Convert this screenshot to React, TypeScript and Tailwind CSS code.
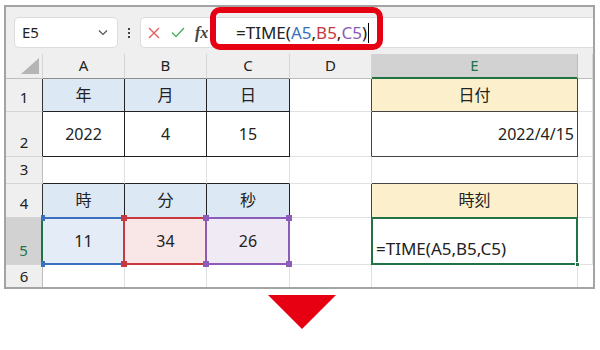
import React from "react";

const FONT = { fontFamily: '"Noto Sans", "Noto Sans CJK JP", sans-serif' };

function Corner({ color, pos }: { color: string; pos: string }) {
  return <span className={`absolute h-[6px] ${color} ${pos}`} />;
}

export default function App() {
  const colHead = "flex items-center justify-center bg-[#efefef] border-r border-b border-r-[#d4d4d4] text-[15px] text-[#222]";
  const rowHead = "flex items-end justify-center pb-[4px] leading-[20px] bg-[#efefef] border-b border-r border-b-[#d4d4d4] text-[15px] text-[#222]";
  const cell = "flex items-center justify-center border-r border-b text-[16px] text-[#222]";
  const plain = `${cell} bg-white border-[#e1e1e1]`;
  const blue = "bg-[#dde8f5]";
  const yellow = "bg-[#fcf0cc]";

  return (
    <div className="relative w-[600px] h-[350px] bg-white overflow-hidden" style={FONT}>
      <div className="ml-[4px] mt-[5px] w-[591px] h-[284px] border-2 border-[#a3a3a3] bg-[#efefef] flex flex-col">
        {/* toolbar */}
        <div className="h-[50px] flex items-start pt-[10px] pl-[8px]">
          <div className="w-[104px] h-[31px] bg-white rounded-[5px] border border-[#dcdcdc] flex items-center justify-between px-[7px] text-[15px] text-[#222]">
            <span>E5</span>
            <svg width="10" height="7" viewBox="0 0 10 7" className="mr-[2px]">
              <path d="M1 1.5 L5 5.5 L9 1.5" fill="none" stroke="#555" strokeWidth="1.2" />
            </svg>
          </div>
          <div className="w-[22px] h-[31px] flex flex-col items-center justify-center gap-[2px]">
            <span className="w-[2px] h-[2px] bg-[#444]" />
            <span className="w-[2px] h-[2px] bg-[#444]" />
            <span className="w-[2px] h-[2px] bg-[#444]" />
          </div>
          <div className="w-[74px] h-[31px] bg-white rounded-l-[5px] border border-r-0 border-[#dcdcdc] flex items-center pl-[7px] gap-[11px]">
            <svg width="12" height="12" viewBox="0 0 12 12">
              <path d="M1 1 L11 11 M11 1 L1 11" stroke="#e06060" strokeWidth="1.4" />
            </svg>
            <svg width="14" height="11" viewBox="0 0 14 11">
              <path d="M1 5.5 L5 9.5 L13 1" fill="none" stroke="#4caf60" strokeWidth="1.4" />
            </svg>
            <span className="italic font-bold text-[16px] text-[#444] -ml-[1px]" style={{ fontFamily: '"Liberation Serif", serif' }}>
              fx
            </span>
          </div>
          <div className="flex-1 h-[31px] bg-white border-y border-[#dcdcdc] flex items-center pl-[22px] text-[17px] text-[#222]">
            <span>=TIME(</span>
            <span className="text-[#3a6fbf]">A5</span>
            <span>,</span>
            <span className="text-[#c8383f]">B5</span>
            <span>,</span>
            <span className="text-[#8b5cb8]">C5</span>
            <span>)</span>
            <span className="ml-[1px] w-[1px] h-[20px] bg-black" />
          </div>
        </div>

        {/* sheet */}
        <div className="flex-1 grid grid-cols-[37px_82px_82px_83px_82px_206px_1fr] grid-rows-[25px_33px_45px_27px_34px_47px_1fr] bg-white">
          {/* header row */}
          <div className="flex items-end justify-end pr-[3px] pb-[4px] bg-[#efefef] border-r border-b border-r-[#d4d4d4] border-b-[#bdbdbd]">
            <svg width="18" height="16" viewBox="0 0 18 16">
              <polygon points="18,0 18,16 0,16" fill="#b5b5b5" />
            </svg>
          </div>
          <div className={`${colHead} border-b-[#8c8c8c]`}>A</div>
          <div className={`${colHead} border-b-[#8c8c8c]`}>B</div>
          <div className={`${colHead} border-b-[#8c8c8c]`}>C</div>
          <div className={`${colHead} border-b-[#bdbdbd]`}>D</div>
          <div className="flex items-center justify-center bg-[#d2d2d2] border-r border-r-[#bdbdbd] border-b-2 border-b-[#217346] text-[15px] text-[#217346]">E</div>
          <div className={`${colHead} border-b-[#bdbdbd]`} />

          {/* row 1 */}
          <div className={`${rowHead} border-r-[#333]`}>1</div>
          <div className={`${cell} ${blue} border-[#222]`}>年</div>
          <div className={`${cell} ${blue} border-[#222]`}>月</div>
          <div className={`${cell} ${blue} border-[#222]`}>日</div>
          <div className={`${cell} bg-white border-b-[#e1e1e1] border-r-[#444]`} />
          <div className={`${cell} ${yellow} border-[#444]`}>日付</div>
          <div className={plain} />

          {/* row 2 */}
          <div className={`${rowHead} border-r-[#333]`}>2</div>
          <div className={`${cell} bg-white border-[#222]`}>2022</div>
          <div className={`${cell} bg-white border-[#222]`}>4</div>
          <div className={`${cell} bg-white border-[#222]`}>15</div>
          <div className={`${cell} bg-white border-b-[#e1e1e1] border-r-[#444]`} />
          <div className={`${cell} bg-white justify-end pr-[3px] border-[#444]`}>2022/4/15</div>
          <div className={plain} />

          {/* row 3 */}
          <div className={`${rowHead} border-r-[#bdbdbd]`}>3</div>
          <div className={`${cell} bg-white border-r-[#e1e1e1] border-b-[#222]`} />
          <div className={`${cell} bg-white border-r-[#e1e1e1] border-b-[#222]`} />
          <div className={`${cell} bg-white border-r-[#e1e1e1] border-b-[#222]`} />
          <div className={plain} />
          <div className={`${cell} bg-white border-r-[#e1e1e1] border-b-[#444]`} />
          <div className={plain} />

          {/* row 4 */}
          <div className={`${rowHead} border-r-[#333]`}>4</div>
          <div className={`${cell} ${blue} border-[#222]`}>時</div>
          <div className={`${cell} ${blue} border-[#222]`}>分</div>
          <div className={`${cell} ${blue} border-[#222]`}>秒</div>
          <div className={`${cell} bg-white border-b-[#e1e1e1] border-r-[#444]`} />
          <div className={`${cell} ${yellow} border-[#444]`}>時刻</div>
          <div className={plain} />

          {/* row 5 */}
          <div className="flex items-end justify-center pb-[4px] leading-[20px] bg-[#d2d2d2] border-b border-b-[#d4d4d4] border-r-2 border-r-[#217346] text-[15px] text-[#217346]">5</div>
          <div className={`${cell} relative bg-[#e4ecf7] border-[#e1e1e1]`}>
            11
            <span className="absolute -left-px -top-px -right-px -bottom-px border-y-2 border-[#3a6fbf]" />
            <Corner color="bg-[#3a6fbf]" pos="w-[4px] -left-[2px] -top-[3px]" />
            <Corner color="bg-[#3a6fbf]" pos="w-[4px] -left-[2px] -bottom-[3px]" />
          </div>
          <div className={`${cell} relative bg-[#f9e6e6] border-[#e1e1e1]`}>
            34
            <span className="absolute -left-[2px] -top-px -right-px -bottom-px border-2 border-[#c8383f]" />
            <Corner color="bg-[#c8383f]" pos="w-[6px] -left-[4px] -top-[3px]" />
            <Corner color="bg-[#c8383f]" pos="w-[6px] -left-[4px] -bottom-[3px]" />
          </div>
          <div className={`${cell} relative bg-[#f0eaf5] border-[#e1e1e1]`}>
            26
            <span className="absolute -left-[2px] -top-px -right-px -bottom-px border-2 border-[#8b5cb8]" />
            <Corner color="bg-[#8b5cb8]" pos="w-[6px] -left-[4px] -top-[3px]" />
            <Corner color="bg-[#8b5cb8]" pos="w-[6px] -left-[4px] -bottom-[3px]" />
            <Corner color="bg-[#8b5cb8]" pos="w-[6px] -right-[3px] -top-[3px]" />
            <Corner color="bg-[#8b5cb8]" pos="w-[6px] -right-[3px] -bottom-[3px]" />
          </div>
          <div className={plain} />
          <div className={`${cell} relative bg-white border-[#e1e1e1] items-end justify-start pl-[4px] pb-[4px] leading-[22px] text-[17px]`}>
            =TIME(A5,B5,C5)
            <span className="absolute -left-px -top-px -right-px -bottom-px border-2 border-[#217346]" />
            <span className="absolute -right-[3px] -bottom-[3px] w-[5px] h-[5px] bg-[#217346] border border-white" />
          </div>
          <div className={plain} />

          {/* row 6 */}
          <div className="flex items-center justify-center bg-[#efefef] border-r border-r-[#bdbdbd] text-[15px] text-[#222] overflow-hidden">6</div>
          <div className="bg-white border-r border-[#e1e1e1]" />
          <div className="bg-white border-r border-[#e1e1e1]" />
          <div className="bg-white border-r border-[#e1e1e1]" />
          <div className="bg-white border-r border-[#e1e1e1]" />
          <div className="bg-white border-r border-[#e1e1e1]" />
          <div className="bg-white" />
        </div>
      </div>

      {/* highlight on formula */}
      <div className="absolute left-[210px] top-[7px] w-[173px] h-[43px] border-[6px] border-[#e60012] rounded-[10px]" />

      {/* arrow */}
      <svg width="68" height="34" viewBox="0 0 68 34" className="ml-[268px] mt-[6px]">
        <polygon points="0,0 68,0 34,34" fill="#e60012" />
      </svg>
    </div>
  );
}
